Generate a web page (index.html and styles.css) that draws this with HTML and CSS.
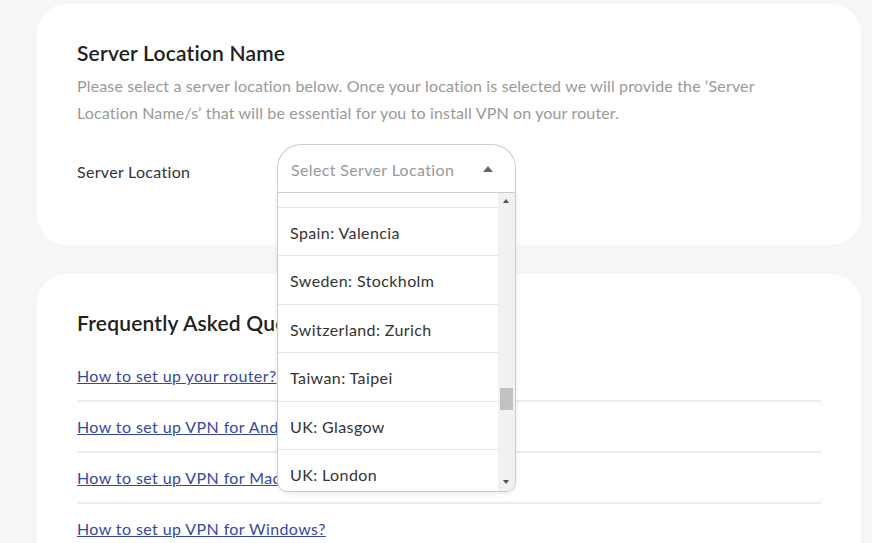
FILE: index.html
```html
<!DOCTYPE html>
<html lang="en">
<head>
<meta charset="utf-8">
<title>Server Location Name</title>
<link rel="stylesheet" href="styles.css">
</head>
<body>
<main class="page">
  <section class="card card-location">
    <h2 class="card-title">Server Location Name</h2>
    <p class="intro">Please select a server location below. Once your location is selected we will provide the ‘Server Location Name/s’ that will be essential for you to install VPN on your router.</p>
    <div class="field">
      <label class="field-label">Server Location</label>
      <div class="select">
        <div class="select-box">
          <span class="placeholder">Select Server Location</span>
          <span class="caret"></span>
        </div>
        <div class="dropdown">
          <div class="options">
            <ul class="option-list">
              <li class="option">Spain: Madrid</li>
              <li class="option">Spain: Valencia</li>
              <li class="option">Sweden: Stockholm</li>
              <li class="option">Switzerland: Zurich</li>
              <li class="option">Taiwan: Taipei</li>
              <li class="option">UK: Glasgow</li>
              <li class="option">UK: London</li>
            </ul>
          </div>
          <div class="scrollbar">
            <span class="sb-up"></span>
            <span class="sb-track"><span class="sb-thumb"></span></span>
            <span class="sb-down"></span>
          </div>
        </div>
      </div>
    </div>
  </section>

  <section class="card card-faq">
    <h2 class="card-title">Frequently Asked Questions</h2>
    <ul class="faq-list">
      <li class="faq-item"><a href="#">How to set up your router?</a></li>
      <li class="faq-item"><a href="#">How to set up VPN for Android?</a></li>
      <li class="faq-item"><a href="#">How to set up VPN for MacOS?</a></li>
      <li class="faq-item"><a href="#">How to set up VPN for Windows?</a></li>
    </ul>
  </section>
</main>
</body>
</html>
```

FILE: styles.css
```css
* { box-sizing: border-box; }
html, body { margin: 0; padding: 0; }
body {
  background: #f6f6f6;
  font-family: "Lato", "Open Sans", sans-serif;
  color: #333;
  width: 872px;
  height: 543px;
  overflow: hidden;
}
.page {
  padding: 4px 11px 0 37px;
  display: flex;
  flex-direction: column;
  gap: 29px;
}
.card {
  background: #fff;
  border-radius: 30px;
  padding: 36px 40px 0 40px;
}
.card-location { height: 241px; }
.card-faq { height: 269px; border-radius: 30px 30px 0 0; }
.card-title {
  margin: 0;
  font-size: 21px;
  line-height: 26px;
  font-weight: 600;
  letter-spacing: 0.2px;
  color: #222;
}
.intro {
  margin: 6px 0 0;
  max-width: 700px;
  font-size: 16px;
  line-height: 27px;
  letter-spacing: 0.15px;
  color: #999;
}
.field {
  margin-top: 18px;
  display: flex;
  align-items: center;
}
.field-label {
  width: 200px;
  padding-top: 6px;
  font-size: 16px;
  letter-spacing: 0.3px;
  color: #333;
}
.select {
  position: relative;
  width: 239px;
}
.select-box {
  height: 49px;
  border: 1px solid #ccc;
  border-bottom: none;
  border-radius: 24px 24px 0 0;
  display: flex;
  align-items: center;
  justify-content: space-between;
  padding: 0 22px 0 13px;
}
.placeholder { font-size: 16px; color: #999; letter-spacing: 0.35px; }
.caret {
  width: 0; height: 0;
  border-left: 5px solid transparent;
  border-right: 5px solid transparent;
  border-bottom: 6px solid #666;
}
.dropdown {
  position: absolute;
  left: 0; top: 48px;
  width: 239px;
  height: 300px;
  background: #fff;
  border: 1px solid #ccc;
  border-radius: 0 0 10px 10px;
  box-shadow: 0 2px 4px rgba(0,0,0,0.08);
  display: flex;
  overflow: hidden;
  z-index: 5;
}
.options { flex: 1; overflow: hidden; }
.option-list {
  list-style: none;
  margin: -34px 0 0;
  padding: 0;
}
.option {
  height: 48.5px;
  line-height: 50px;
  padding-left: 12px;
  font-size: 16px;
  letter-spacing: 0.4px;
  color: #333;
  border-bottom: 1px solid #e6e6e6;
}
.scrollbar {
  width: 17px;
  background: #f1f1f1;
  display: flex;
  flex-direction: column;
  align-items: center;
}
.sb-up, .sb-down {
  height: 17px;
  width: 17px;
  position: relative;
}
.sb-up::after, .sb-down::after {
  content: "";
  position: absolute;
  left: 5px; top: 6px;
  border-left: 3.5px solid transparent;
  border-right: 3.5px solid transparent;
}
.sb-up::after { border-bottom: 4px solid #505050; }
.sb-down::after { border-top: 4px solid #505050; }
.sb-track { flex: 1; width: 17px; position: relative; }
.sb-thumb {
  position: absolute;
  left: 2px; top: 178px;
  width: 13px; height: 22px;
  background: #c1c1c1;
}
.faq-list {
  list-style: none;
  margin: 15px 0 0;
  padding: 0;
}
.faq-item {
  height: 51px;
  display: flex;
  align-items: center;
  border-bottom: 2px solid #ececec;
}
.faq-item a {
  font-size: 16px;
  letter-spacing: 0.4px;
  color: #3548a6;
  text-decoration: underline;
}
```
